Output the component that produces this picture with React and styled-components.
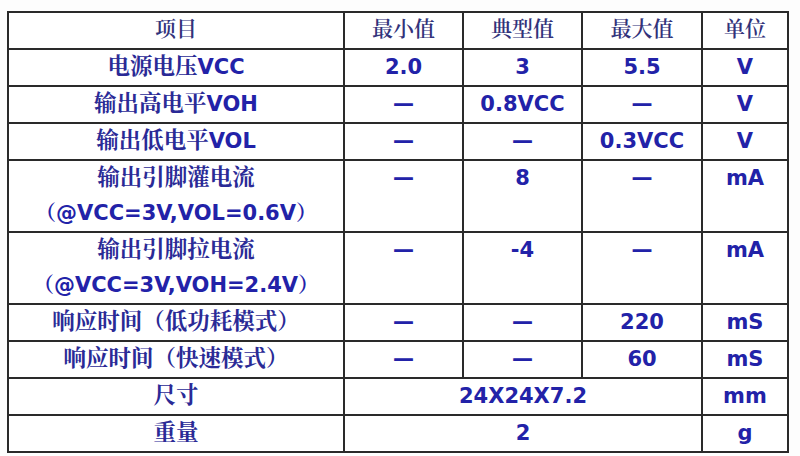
import React from "react";
import styled, { createGlobalStyle } from "styled-components";

const GlobalStyle = createGlobalStyle`
    html, body {
        margin: 0;
        padding: 0;
        background: #ffffff;
    }
`;

const Page = styled.div`
    width: 800px;
    height: 456px;
    padding: 11px 0 0 7px;
    box-sizing: border-box;
    background: #fdfdfd;
`;

const Table = styled.table`
    border-collapse: collapse;
    table-layout: fixed;
    width: 780px;
    background: #ffffff;
    font-family: "DejaVu Sans", "Noto Serif CJK SC", "Noto Sans CJK SC", sans-serif;
    font-weight: bold;
    font-size: 21px;
    color: #2222a8;
`;

const Row = styled.tr`
    height: ${(p) => (p.$tall ? 72 : 36)}px;
`;

const Cell = styled.td`
    border: 2px solid #2a2a2a;
    padding: 0;
    text-align: center;
    vertical-align: top;
    white-space: nowrap;
`;

const HeadCell = styled(Cell).attrs({ as: "th" })`
    font-weight: bold;
`;

const Line = styled.div`
    height: 35px;
    line-height: ${(p) => (p.$head ? 32 : 34)}px;
    overflow: visible;
`;

const Zh = styled.span`
    font-family: "Noto Serif CJK SC", "Noto Sans CJK SC", serif;
    font-size: ${(p) => (p.$head ? 21 : 22.5)}px;
    line-height: 1;
    font-weight: ${(p) => (p.$head ? 600 : 700)};
    color: ${(p) => (p.$head ? "#32327a" : "#2a2a96")};
`;

const Dash = () => <span>—</span>;

const rows = [
    { name: [[["电源电压"], "VCC"]], cells: ["2.0", "3", "5.5"], unit: "V" },
    { name: [[["输出高电平"], "VOH"]], cells: [null, "0.8VCC", null], unit: "V" },
    { name: [[["输出低电平"], "VOL"]], cells: [null, null, "0.3VCC"], unit: "V" },
    {
        tall: true,
        name: [[["输出引脚灌电流"]], ["（@VCC=3V,VOL=0.6V）"]],
        cells: [null, "8", null],
        unit: "mA",
    },
    {
        tall: true,
        name: [[["输出引脚拉电流"]], ["（@VCC=3V,VOH=2.4V）"]],
        cells: [null, "-4", null],
        unit: "mA",
    },
    { name: [[["响应时间（低功耗模式）"]]], cells: [null, null, "220"], unit: "mS" },
    { name: [[["响应时间（快速模式）"]]], cells: [null, null, "60"], unit: "mS" },
    { name: [[["尺寸"]]], span: "24X24X7.2", unit: "mm" },
    { name: [[["重量"]]], span: "2", unit: "g" },
];

const renderLine = (parts, i) => (
    <Line key={i}>
        {parts.map((p, j) => (Array.isArray(p) ? <Zh key={j}>{p[0]}</Zh> : <React.Fragment key={j}>{p}</React.Fragment>))}
    </Line>
);

export default function App() {
    return (
        <Page>
            <GlobalStyle />
            <Table>
                <colgroup>
                    <col style={{ width: 336 }} />
                    <col style={{ width: 119 }} />
                    <col style={{ width: 119 }} />
                    <col style={{ width: 120 }} />
                    <col style={{ width: 86 }} />
                </colgroup>
                <thead>
                    <Row>
                        {["项目", "最小值", "典型值", "最大值", "单位"].map((h) => (
                            <HeadCell key={h}>
                                <Line $head>
                                    <Zh $head>{h}</Zh>
                                </Line>
                            </HeadCell>
                        ))}
                    </Row>
                </thead>
                <tbody>
                    {rows.map((r, i) => (
                        <Row key={i} $tall={r.tall}>
                            <Cell>{r.name.map(renderLine)}</Cell>
                            {r.span ? (
                                <Cell colSpan={3}>
                                    <Line>{r.span}</Line>
                                </Cell>
                            ) : (
                                r.cells.map((c, j) => (
                                    <Cell key={j}>
                                        <Line>{c ?? <Dash />}</Line>
                                    </Cell>
                                ))
                            )}
                            <Cell>
                                <Line>{r.unit}</Line>
                            </Cell>
                        </Row>
                    ))}
                </tbody>
            </Table>
        </Page>
    );
}
